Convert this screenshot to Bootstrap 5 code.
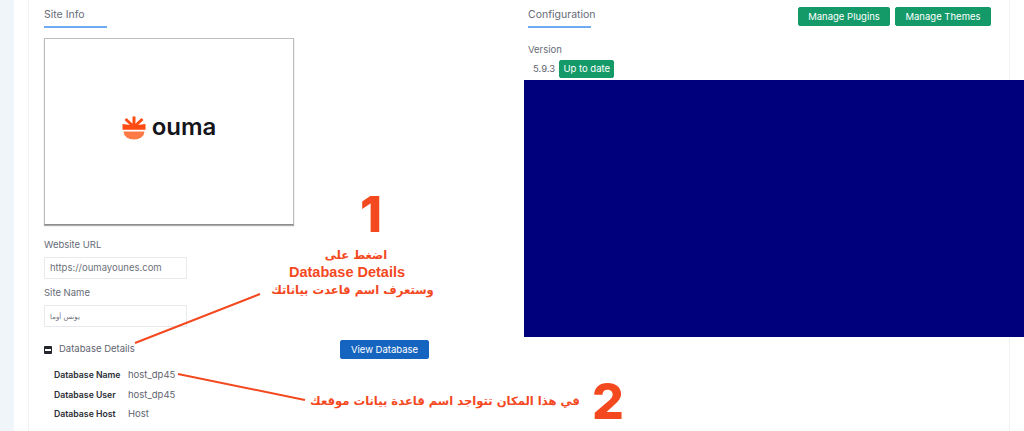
<!doctype html>
<html lang="en">
<head>
<meta charset="utf-8">
<title>Site Info</title>
<link href="https://cdn.jsdelivr.net/npm/bootstrap@5.3.0/dist/css/bootstrap.min.css" rel="stylesheet">
<style>
html,body{height:100%;overflow:hidden}
body{background:#f0f5fa;font-family:Inter,"DejaVu Sans",sans-serif;font-size:9.5px;color:#5f6470;position:relative}
.shell{margin-left:14px;height:431px;background:#fff;padding-left:14px}
.sheet{width:982px;height:431px;border-left:1px solid #f1f2f4;border-right:1px solid #f1f2f4}
.leftcol{width:495px;padding-left:15px}
.rightcol{width:485px}
.tabhead{height:28px;width:63px;border-bottom:2px solid #6fabf3;font-size:10.5px;padding-top:8px;line-height:14px;white-space:nowrap;color:#666b76}
.logobox{width:250px;height:187px;margin-top:10px;padding-bottom:8px;border:1px solid #bdbdbd;border-bottom:1px solid #8c8c8c;box-shadow:0 1px 1px #aaa;background:#fff;gap:6px}
.logotext{font-family:Inter,sans-serif;font-size:24px;font-weight:600;color:#14141a;line-height:1;margin-top:-1px}
.flabel{line-height:13px;color:#666b76;white-space:nowrap}
.urllabel{margin-top:13px}
.namelabel{margin-top:7px}
.fbox{width:143px;height:22px;margin-top:6px;border:1px solid #e8e9ec;padding-left:5px;font-size:9.5px;line-height:20px;color:#6d717b}
.arab{font-family:"DejaVu Sans",sans-serif;font-size:7px}
.detailhead{margin-top:13px;height:19px;width:385px}
.minus{width:8px;height:8px;background:#22252b;border-radius:1px;margin-right:7px;flex:none}
.minus::after{content:"";display:block;width:6px;height:2px;margin:3px 1px;background:#fff}
.btn.vbtn{width:89px;height:19px;padding:0;font-size:9.5px;line-height:17px;background:#1565c0;border-color:#1565c0;border-radius:2px;--bs-btn-color:#fff}
.btn.gbtn{height:19px;padding:0;font-size:9.5px;line-height:17px;background:#149a69;border-color:#149a69;color:#fff;border-radius:2px}
.btn.plugbtn{width:92px}
.btn.themebtn{width:96px}
.btn.statebtn{width:55px;height:18px;line-height:16px}
.btngap{gap:5px}
.dbrows{padding-left:10px;margin-top:6px}
.dbrow{height:19.5px;line-height:19.5px;white-space:nowrap}
.dbrow b{display:inline-block;width:74px;color:#2b2e36;font-weight:600;font-size:8.7px}
.confighead{padding-right:18px;padding-left:4px}
.confighead .btn{margin-top:7px}
.verlabel{margin:15px 0 0 4px;line-height:13px;color:#666b76}
.verrow{margin:4px 0 0 9px;gap:4px;height:18px}
.navyblock{height:257px;margin:2px -16px 0 0;background:#00007c}
.notes{position:absolute;inset:0;pointer-events:none;color:#f4481e;white-space:nowrap}
.callout{position:absolute;left:252px;top:247px;width:201px;text-align:center;font-family:"DejaVu Sans",sans-serif;font-size:11.6px;font-weight:700;line-height:17px}
.callout strong{font-family:"Liberation Sans",sans-serif;font-size:14.5px;font-weight:700;display:block;padding-right:11px;line-height:17.5px}
.firstline{padding-left:7px}
.callout2{position:absolute;left:306px;top:392px;width:278px;text-align:center;font-family:"DejaVu Sans",sans-serif;font-size:11.6px;font-weight:700;line-height:18px}
.bignum{position:absolute;font-family:Inter,sans-serif;font-weight:800;font-size:50px;line-height:1}
.num1{left:360px;top:189px}
.num2{left:592px;top:376px}
</style>
</head>
<body>
<div class="shell">
  <div class="sheet d-flex">
    <div class="leftcol">
      <div class="tabhead">Site Info</div>
      <div class="logobox d-flex align-items-center justify-content-center">
        <svg width="24" height="24" viewBox="0 0 24 24" aria-hidden="true">
          <path d="M1.5 15.5H22.5A10.5 8 0 0 1 1.5 15.5Z" fill="#ff7a45"/>
          <g stroke="#ff4a12" stroke-width="3" fill="none">
            <path d="M12 .5V10"/><path d="M3.5 3 12 11"/><path d="M20.5 3 12 11"/>
          </g>
          <path d="M.5 8 12 9.5 23.5 8V13.8H.5Z" fill="#ff4a12"/>
        </svg>
        <span class="logotext">ouma</span>
      </div>
      <div class="flabel urllabel">Website URL</div>
      <div class="fbox">https://oumayounes.com</div>
      <div class="flabel namelabel">Site Name</div>
      <div class="fbox"><span class="arab" dir="rtl">يونس أوما</span></div>
      <div class="detailhead d-flex align-items-center justify-content-between">
        <div class="d-flex align-items-center"><span class="minus"></span><span>Database Details</span></div>
        <button class="btn btn-primary vbtn" type="button">View Database</button>
      </div>
      <div class="dbrows">
        <div class="dbrow"><b>Database Name</b>host_dp45</div>
        <div class="dbrow"><b>Database User</b>host_dp45</div>
        <div class="dbrow"><b>Database Host</b>Host</div>
      </div>
    </div>
    <div class="rightcol">
      <div class="confighead d-flex justify-content-between align-items-start">
        <div class="tabhead">Configuration</div>
        <div class="d-flex btngap">
          <button class="btn gbtn plugbtn" type="button">Manage Plugins</button>
          <button class="btn gbtn themebtn" type="button">Manage Themes</button>
        </div>
      </div>
      <div class="verlabel">Version</div>
      <div class="verrow d-flex align-items-center">
        <span>5.9.3</span>
        <button class="btn gbtn statebtn" type="button">Up to date</button>
      </div>
      <div class="navyblock"></div>
    </div>
  </div>
</div>
<div class="notes">
  <svg class="position-absolute top-0 start-0" width="1024" height="431" aria-hidden="true">
    <path d="M135 343 260 294M178 374 305 400" stroke="#f4481e" stroke-width="2" fill="none"/>
  </svg>
  <div class="bignum num1">1</div>
  <div class="callout"><div class="firstline" dir="rtl">اضغط على</div><strong>Database Details</strong><div dir="rtl">وستعرف اسم قاعدت بياناتك</div></div>
  <div class="callout2" dir="rtl">في هذا المكان تتواجد اسم قاعدة بيانات موقعك</div>
  <div class="bignum num2">2</div>
</div>
<script src="https://cdn.jsdelivr.net/npm/bootstrap@5.3.0/dist/js/bootstrap.bundle.min.js"></script>
</body>
</html>
